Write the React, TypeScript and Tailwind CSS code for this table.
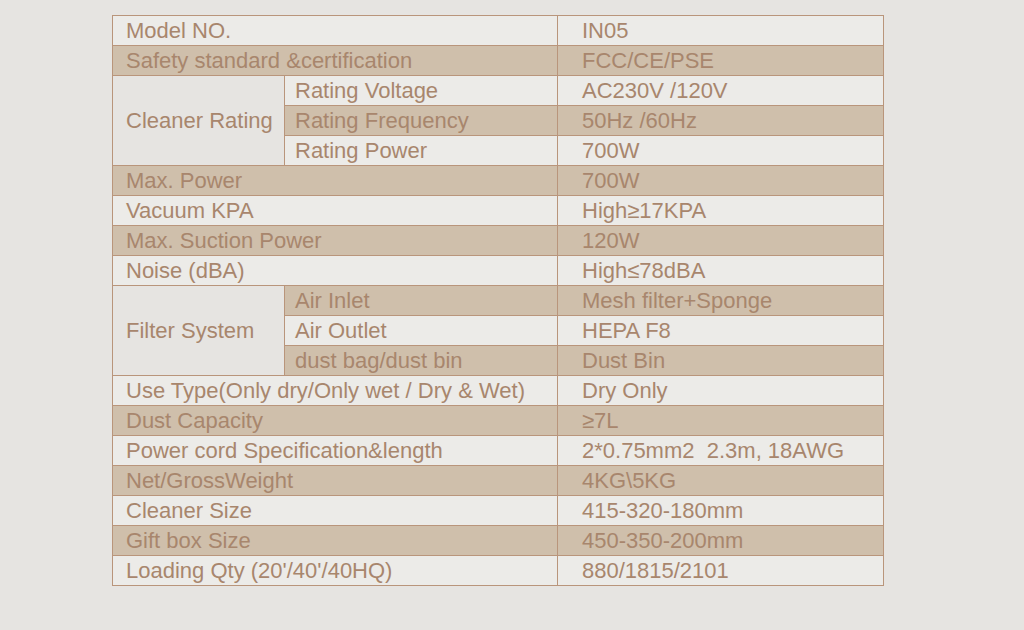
import React from 'react'

type Row = {
  label: string
  sub?: string
  value: string
  span?: number // rowspan for the grouped label
  skipLabel?: boolean
}

const rows: Row[] = [
  { label: 'Model NO.', value: 'IN05' },
  { label: 'Safety standard &certification', value: 'FCC/CE/PSE' },
  { label: 'Cleaner Rating', sub: 'Rating Voltage', value: 'AC230V /120V', span: 3 },
  { label: '', sub: 'Rating Frequency', value: '50Hz /60Hz', skipLabel: true },
  { label: '', sub: 'Rating Power', value: '700W', skipLabel: true },
  { label: 'Max. Power', value: '700W' },
  { label: 'Vacuum KPA', value: 'High≥17KPA' },
  { label: 'Max. Suction Power', value: '120W' },
  { label: 'Noise (dBA)', value: 'High≤78dBA' },
  { label: 'Filter System', sub: 'Air Inlet', value: 'Mesh filter+Sponge', span: 3 },
  { label: '', sub: 'Air Outlet', value: 'HEPA F8', skipLabel: true },
  { label: '', sub: 'dust bag/dust bin', value: 'Dust Bin', skipLabel: true },
  { label: 'Use Type(Only dry/Only wet / Dry & Wet)', value: 'Dry Only' },
  { label: 'Dust Capacity', value: '≥7L' },
  { label: 'Power cord Specification&length', value: '2*0.75mm2\u00a0\u00a02.3m, 18AWG' },
  { label: 'Net/GrossWeight', value: '4KG\\5KG' },
  { label: 'Cleaner Size', value: '415-320-180mm' },
  { label: 'Gift box Size', value: '450-350-200mm' },
  { label: "Loading Qty (20'/40'/40HQ)", value: '880/1815/2101' },
]

export default function App() {
  return (
    <div className="min-h-[630px] w-full bg-[#e6e4e1] pt-[15px] pl-[112px] font-['Liberation_Sans',Arial,sans-serif] text-[22px] leading-none text-[#a8866d]">
      <table className="w-[771px] table-fixed border-collapse border border-[#b9957b]">
        <colgroup>
          <col className="w-[172px]" />
          <col className="w-[273px]" />
          <col className="w-[326px]" />
        </colgroup>
        <tbody>
          {rows.map((r, i) => {
            const shade = i % 2 === 1 ? 'bg-[#cfbfab]' : 'bg-[#ecebe8]'
            const cell = 'border border-[#b9957b] h-[30px] p-0 whitespace-nowrap'
            return (
              <tr key={i}>
                {r.sub === undefined ? (
                  <td colSpan={2} className={`${cell} ${shade} pl-[13px]`}>
                    {r.label}
                  </td>
                ) : (
                  <>
                    {!r.skipLabel && (
                      <td rowSpan={r.span} className={`${cell} bg-[#e6e4e1] pl-[13px]`}>
                        {r.label}
                      </td>
                    )}
                    <td className={`${cell} ${shade} pl-[10px]`}>{r.sub}</td>
                  </>
                )}
                <td className={`${cell} ${shade} pl-[24px]`}>{r.value}</td>
              </tr>
            )
          })}
        </tbody>
      </table>
    </div>
  )
}
